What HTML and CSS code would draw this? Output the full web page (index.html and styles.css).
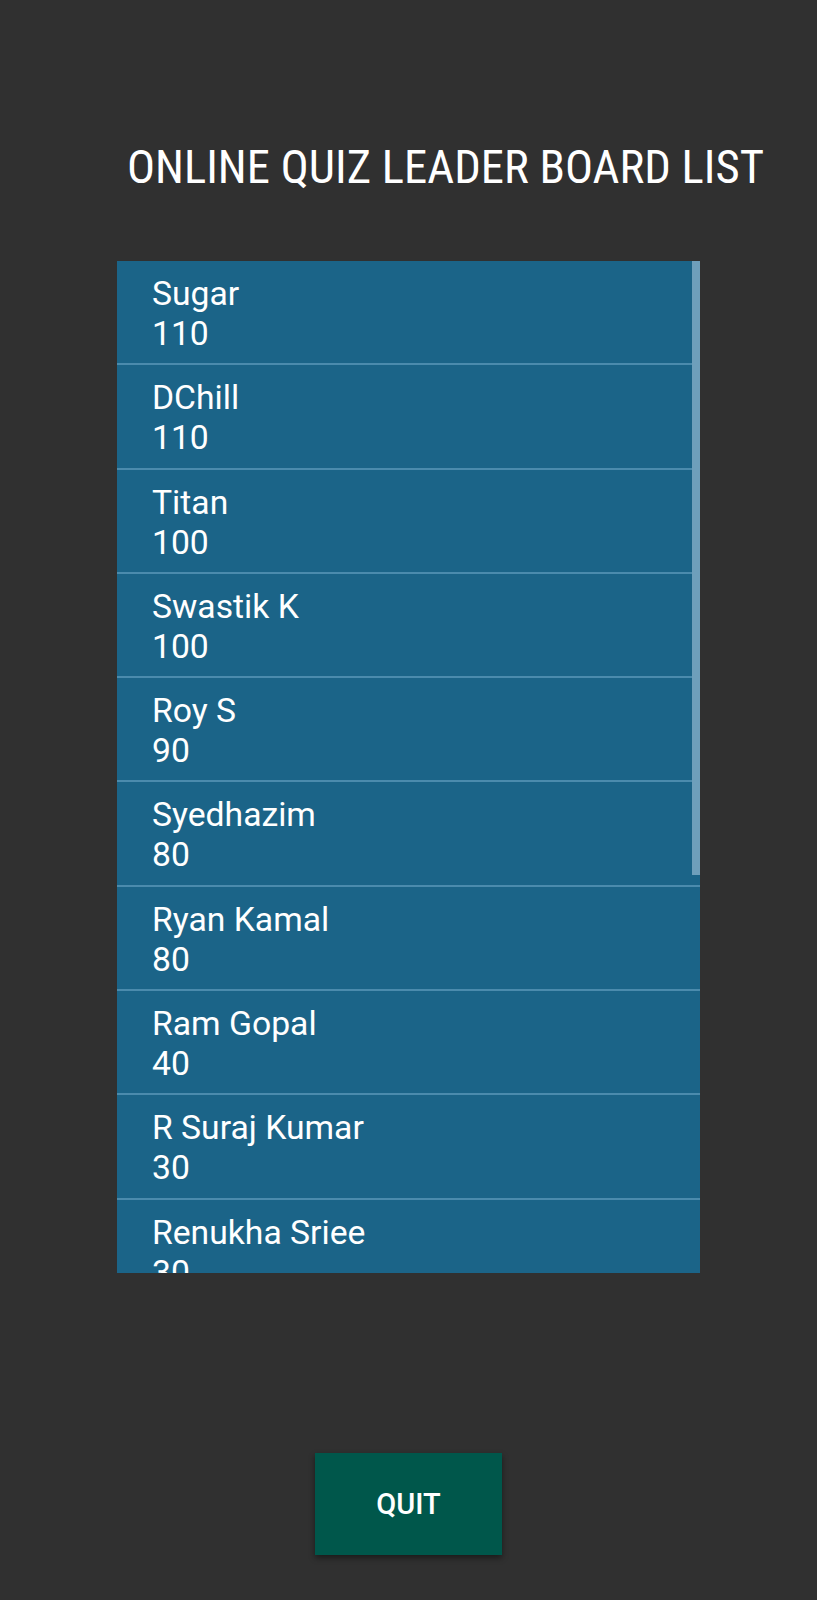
FILE: index.html
```html
<!DOCTYPE html>
<html>
<head>
<meta charset="utf-8">
<link rel="stylesheet" href="styles.css">
</head>
<body>
<div class="screen">
  <h1 class="title">ONLINE QUIZ LEADER BOARD LIST</h1>
  <div class="board">
    <ul class="list">
      <li class="row"><span class="name">Sugar</span><span class="score">110</span></li>
      <li class="row"><span class="name">DChill</span><span class="score">110</span></li>
      <li class="row"><span class="name">Titan</span><span class="score">100</span></li>
      <li class="row"><span class="name">Swastik K</span><span class="score">100</span></li>
      <li class="row"><span class="name">Roy S</span><span class="score">90</span></li>
      <li class="row"><span class="name">Syedhazim</span><span class="score">80</span></li>
      <li class="row"><span class="name">Ryan Kamal</span><span class="score">80</span></li>
      <li class="row"><span class="name">Ram Gopal</span><span class="score">40</span></li>
      <li class="row"><span class="name">R Suraj Kumar</span><span class="score">30</span></li>
      <li class="row"><span class="name">Renukha Sriee</span><span class="score">30</span></li>
    </ul>
    <div class="scrollbar"></div>
  </div>
  <div class="actions">
    <button class="quit">QUIT</button>
  </div>
</div>
</body>
</html>
```
FILE: styles.css
```css
html, body {
  margin: 0;
  padding: 0;
  background: #303030;
}
.screen {
  width: 817px;
  height: 1600px;
  display: flex;
  flex-direction: column;
  background: #303030;
}
.title {
  margin: 0;
  padding: 139px 0 0 127px;
  font-family: "Roboto Condensed", Roboto, sans-serif;
  font-stretch: condensed;
  font-weight: 400;
  font-size: 46.7px;
  line-height: 56px;
  color: #ffffff;
  white-space: nowrap;
}
.board {
  position: relative;
  margin: 66px 0 0 117px;
  width: 583px;
  height: 1012px;
  overflow: hidden;
  background: #1b6488;
}
.list {
  list-style: none;
  margin: 0;
  padding: 0;
}
.row {
  display: flex;
  flex-direction: column;
  padding: 13px 0 9.3px 35px;
  border-bottom: 2px solid #4b8bad;
  font-family: Roboto, sans-serif;
  font-size: 33.7px;
  line-height: 40px;
  color: #ffffff;
}
.scrollbar {
  position: absolute;
  top: 0;
  right: 0;
  width: 8px;
  height: 614px;
  background: #6e9fbb;
}
.actions {
  display: flex;
  justify-content: center;
  margin-top: 180px;
}
.quit {
  width: 187px;
  height: 102px;
  border: none;
  background: #00574b;
  color: #ffffff;
  font-family: Roboto, sans-serif;
  font-weight: 500;
  font-size: 29px;
  box-shadow: 0 3px 6px rgba(0, 0, 0, 0.45);
}
```
